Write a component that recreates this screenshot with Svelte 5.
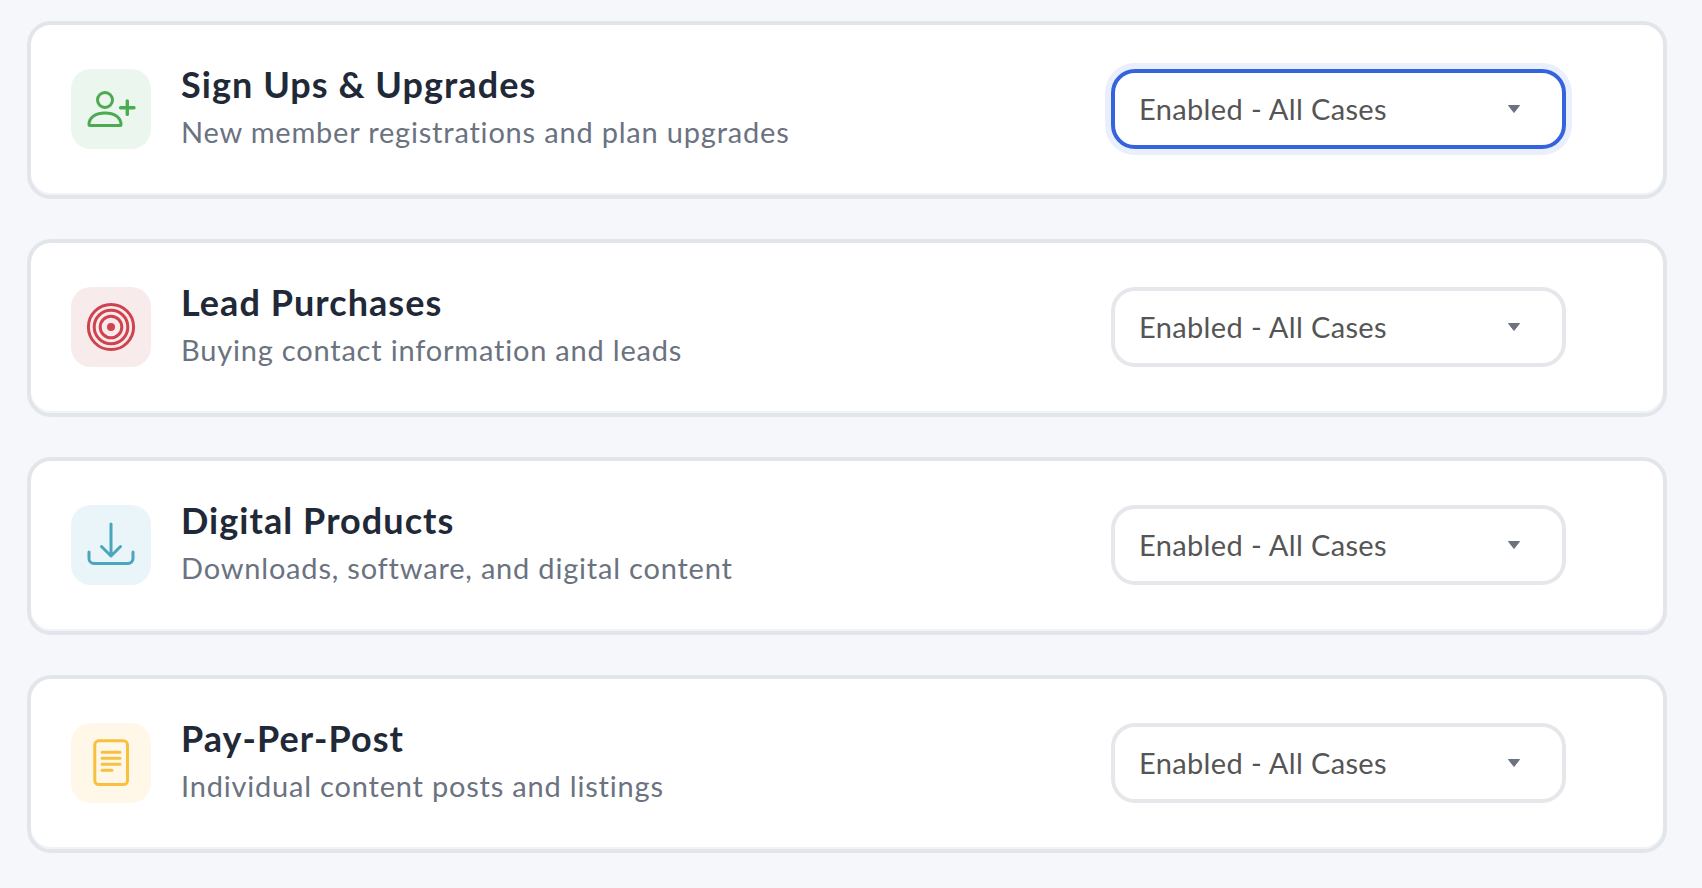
<script>
	const rows = [
		{ id: 'signups', title: 'Sign Ups & Upgrades', desc: 'New member registrations and plan upgrades', focused: true },
		{ id: 'leads', title: 'Lead Purchases', desc: 'Buying contact information and leads' },
		{ id: 'digital', title: 'Digital Products', desc: 'Downloads, software, and digital content' },
		{ id: 'posts', title: 'Pay-Per-Post', desc: 'Individual content posts and listings' }
	];
</script>

<div class="list">
	{#each rows as row}
		<div class="card">
			<div class="info">
				<div class="icon {row.id}">
					<svg width="80" height="80" viewBox="0 0 80 80" fill="none" stroke="currentColor" stroke-width="3" stroke-linecap="round" stroke-linejoin="round">
						{#if row.id === 'signups'}
							<circle cx="34" cy="31" r="7.5" />
							<path d="M18 55.5c0-7.5 7-11.5 16-11.5s16 4 16 11.5c0 .6-.4 1-1 1H19c-.6 0-1-.4-1-1z" />
							<path d="M56.3 32v13.4M49.6 38.7H63" stroke-width="3.4" />
						{:else if row.id === 'leads'}
							<circle cx="40" cy="40" r="22.6" />
							<circle cx="40" cy="40" r="16.8" />
							<circle cx="40" cy="40" r="10.8" />
							<circle cx="40" cy="40" r="4" fill="currentColor" stroke="none" />
						{:else if row.id === 'digital'}
							<path d="M40 19v32M30.5 41.5 40 51l9.5-9.5" />
							<path d="M18 47v6.5a5 5 0 0 0 5 5h34a5 5 0 0 0 5-5V47" />
						{:else}
							<rect x="23.8" y="17.8" width="32.7" height="43.7" rx="4" />
							<path d="M31 29.3h18M31 35.3h18M31 41.3h18M31 47.3h10" />
						{/if}
					</svg>
				</div>
				<div class="text">
					<div class="title">{row.title}</div>
					<div class="desc">{row.desc}</div>
				</div>
			</div>
			<div class="select" class:focused={row.focused}>
				<span>Enabled - All Cases</span>
				<svg class="caret" width="14" height="10" viewBox="0 0 14 10"><path d="M1.5 1.5h11L7 8.5z" fill="#6b7280" stroke="#6b7280" stroke-linejoin="round" /></svg>
			</div>
		</div>
	{/each}
</div>

<style>
	:global(body) {
		background: #f5f7fb;
		font-family: Lato, "Open Sans", sans-serif;
		font-variant-ligatures: none;
	}

	.list {
		display: flex;
		flex-direction: column;
		gap: 40px;
		padding: 21px 35px 0 27px;
	}

	.card {
		display: flex;
		justify-content: space-between;
		align-items: center;
		height: 178px;
		box-sizing: border-box;
		padding: 0 97px 2px 40px;
		background: #fff;
		border: 4px solid #e2e6eb;
		border-radius: 24px;
		box-shadow: inset 0 -2px 0 #f1f3f6;
	}

	.info {
		display: flex;
		align-items: center;
		gap: 30px;
	}

	.icon {
		width: 80px;
		height: 80px;
		border-radius: 20px;
		flex-shrink: 0;
	}

	.icon svg {
		display: block;
	}

	.signups {
		background: #ebf6ee;
		color: #4caa50;
	}

	.leads {
		background: #f8ebec;
		color: #d0434e;
	}

	.digital {
		background: #e9f5f8;
		color: #4ba6bd;
	}

	.posts {
		background: #fff8e8;
		color: #f8c03f;
	}

	.title {
		font-size: 36px;
		font-weight: 700;
		line-height: 44px;
		letter-spacing: 1.05px;
		color: #1f2937;
		margin-top: -4px;
	}

	.desc {
		font-size: 29px;
		line-height: 40px;
		letter-spacing: 0.8px;
		margin-top: 6px;
		color: #6b7280;
	}

	.select {
		display: flex;
		justify-content: space-between;
		align-items: center;
		width: 455px;
		height: 80px;
		box-sizing: border-box;
		padding: 0 41px 0 24px;
		border: 4px solid #e5e7eb;
		border-radius: 24px;
		background: #fff;
		font-size: 29px;
		letter-spacing: 0.36px;
		color: #555;
	}

	.select span {
		margin-top: -1px;
	}

	.select.focused {
		border-color: #3563e0;
		box-shadow: 0 0 0 6px #e9effb;
	}

	.caret {
		margin-top: 0;
	}
</style>
